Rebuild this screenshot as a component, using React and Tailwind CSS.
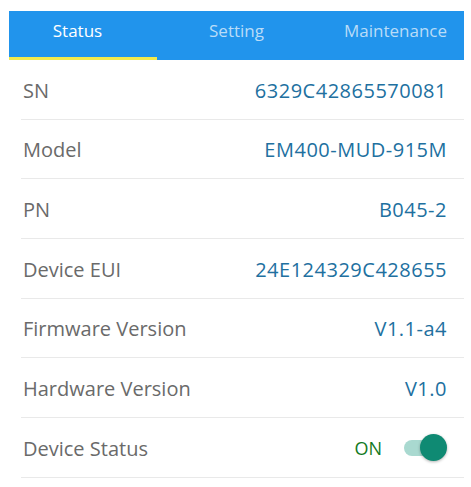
import React, { useState } from 'react';

const rows = [
  { label: 'SN', value: '6329C42865570081', h: 'h-[60px]' },
  { label: 'Model', value: 'EM400-MUD-915M', h: 'h-[59px]' },
  { label: 'PN', value: 'B045-2', h: 'h-[60px]' },
  { label: 'Device EUI', value: '24E124329C428655', h: 'h-[60px]' },
  { label: 'Firmware Version', value: 'V1.1-a4', h: 'h-[59px]' },
  { label: 'Hardware Version', value: 'V1.0', h: 'h-[60px]' },
];

const tabs = ['Status', 'Setting', 'Maintenance'];

function Toggle({ on, onClick }) {
  return (
    <button onClick={onClick} className="relative flex h-[27px] w-[43px] items-center">
      <span
        className={
          'absolute left-0 h-[16px] w-[36px] rounded-full ' +
          (on ? 'bg-[#a9d9d0]' : 'bg-[#cfcfcf]')
        }
      />
      <span
        className={
          'absolute top-0 h-[27px] w-[27px] rounded-full shadow-[0_1px_3px_rgba(0,0,0,0.3)] ' +
          (on ? 'left-[16px] bg-[#0f8a73]' : 'left-0 bg-[#f5f5f5]')
        }
      />
    </button>
  );
}

export default function App() {
  const [active, setActive] = useState(0);
  const [deviceOn, setDeviceOn] = useState(true);

  return (
    <div className="min-h-screen w-[471px] bg-white pt-[11px] font-['Open_Sans',sans-serif]">
      {/* tab bar */}
      <div className="ml-[9px] w-[455px] overflow-hidden bg-[#2194ec]">
        <div className="-ml-[11px] flex w-[477px]">
          {tabs.map((t, i) => (
            <button
              key={t}
              onClick={() => setActive(i)}
              className="flex flex-1 flex-col"
            >
              <span
                className={
                  'flex h-[46px] items-center justify-center pb-[7px] text-[17px] ' +
                  (active === i ? 'text-white' : 'text-[#b9dcf8]')
                }
              >
                {t}
              </span>
              <span
                className={
                  'h-[3px] w-full ' + (active === i ? 'bg-[#f3ea4c]' : 'bg-transparent')
                }
              />
            </button>
          ))}
        </div>
      </div>

      {/* info rows */}
      <div className="ml-[21px] w-[443px]">
        {rows.map((r) => (
          <div
            key={r.label}
            className={
              'flex items-center justify-between border-b border-[#e9e9e9] pl-[2px] pr-[17px] pt-[2px] ' + r.h
            }
          >
            <span className="text-[20px] text-[#6a6a6a]">{r.label}</span>
            <span className="text-[20px] tracking-[0.5px] text-[#21709f]">{r.value}</span>
          </div>
        ))}
        <div className="flex h-[60px] items-center justify-between border-b border-[#e9e9e9] pl-[2px] pr-[17px]">
          <span className="pt-[2px] text-[20px] text-[#6a6a6a]">Device Status</span>
          <div className="flex items-center gap-[22px]">
            <span className="pt-[2px] text-[18px] text-[#137a1f]">{deviceOn ? 'ON' : 'OFF'}</span>
            <Toggle on={deviceOn} onClick={() => setDeviceOn((v) => !v)} />
          </div>
        </div>
      </div>
    </div>
  );
}
